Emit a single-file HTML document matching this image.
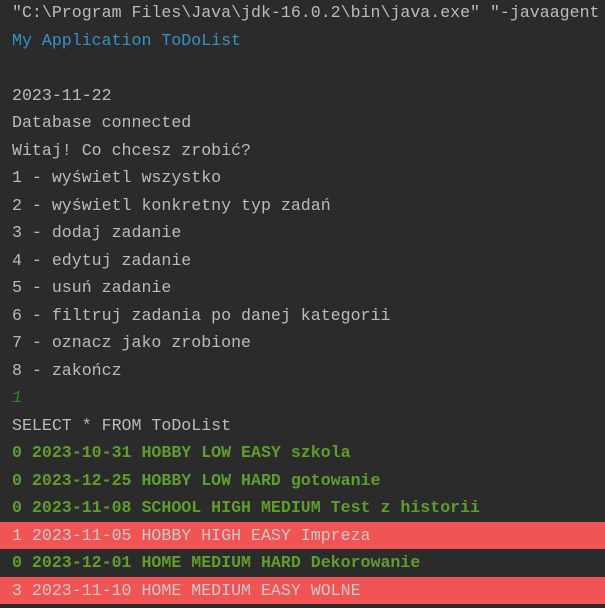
<!DOCTYPE html>
<html><head><meta charset="utf-8"><style>
html,body{margin:0;padding:0;background:#2b2b2b;width:605px;height:608px;overflow:hidden}
.c{position:absolute;top:-0.75px;left:0;right:0;font-family:"Liberation Mono","DejaVu Sans Mono",monospace;font-size:16.6px;color:#bbbbbb}
.l{height:27.5px;line-height:27.5px;padding-left:12px;white-space:pre}
.b{color:#3592c4}
.g{color:#5f9e2c;font-weight:bold}
.i{color:#2a8a22;font-style:italic}
.r{background:#f05454;color:#c8c8c8}
</style></head><body><div class="c">
<div class="l">"C:\Program Files\Java\jdk-16.0.2\bin\java.exe" "-javaagent</div>
<div class="l b">My Application ToDoList</div>
<div class="l"> </div>
<div class="l">2023-11-22</div>
<div class="l">Database connected</div>
<div class="l">Witaj! Co chcesz zrobić?</div>
<div class="l">1 - wyświetl wszystko</div>
<div class="l">2 - wyświetl konkretny typ zadań</div>
<div class="l">3 - dodaj zadanie</div>
<div class="l">4 - edytuj zadanie</div>
<div class="l">5 - usuń zadanie</div>
<div class="l">6 - filtruj zadania po danej kategorii</div>
<div class="l">7 - oznacz jako zrobione</div>
<div class="l">8 - zakończ</div>
<div class="l i">1</div>
<div class="l">SELECT * FROM ToDoList</div>
<div class="l g">0 2023-10-31 HOBBY LOW EASY szkola</div>
<div class="l g">0 2023-12-25 HOBBY LOW HARD gotowanie</div>
<div class="l g">0 2023-11-08 SCHOOL HIGH MEDIUM Test z historii</div>
<div class="l r">1 2023-11-05 HOBBY HIGH EASY Impreza</div>
<div class="l g">0 2023-12-01 HOME MEDIUM HARD Dekorowanie</div>
<div class="l r">3 2023-11-10 HOME MEDIUM EASY WOLNE</div>
</div></body></html>
